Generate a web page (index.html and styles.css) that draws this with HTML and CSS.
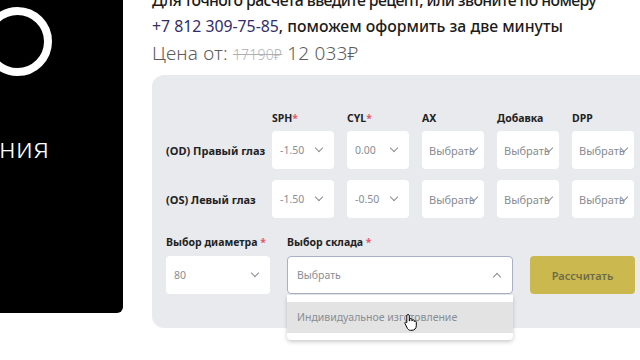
FILE: index.html
```html
<!DOCTYPE html>
<html lang="ru">
<head>
  <meta charset="UTF-8" />
  <meta name="viewport" content="width=device-width, initial-scale=1" />
  <title>Расчет линз</title>
  <link rel="stylesheet" href="styles.css">
</head>
<body>

  <!-- Left promo panel -->
  <aside class="promo">
    <div class="promo-ring"></div>
    <p class="promo-text">ния</p>
  </aside>

  <!-- Calculator -->
  <main class="calc">
    <p class="intro"><span class="lead">Для точного расчета введите рецепт, или звоните по номеру</span><br>
      <a class="phone" href="#">+7 812 309-75-85</a>, поможем оформить за две минуты</p>
    <p class="price">Цена от: <s class="old">17190₽</s> 12 033₽</p>

    <section class="form">
      <div class="grid">
        <span></span>
        <span class="col">SPH<i>*</i></span>
        <span class="col">CYL<i>*</i></span>
        <span class="col">AX</span>
        <span class="col">Добавка</span>
        <span class="col">DPP</span>

        <span class="eye">(OD) Правый глаз</span>
        <div class="sel"><span>-1.50</span><b class="chev"></b></div>
        <div class="sel"><span>0.00</span><b class="chev"></b></div>
        <div class="sel tight"><span>Выбрать</span><b class="chev"></b></div>
        <div class="sel tight"><span>Выбрать</span><b class="chev"></b></div>
        <div class="sel tight"><span>Выбрать</span><b class="chev"></b></div>

        <span class="eye">(OS) Левый глаз</span>
        <div class="sel"><span>-1.50</span><b class="chev"></b></div>
        <div class="sel"><span>-0.50</span><b class="chev"></b></div>
        <div class="sel tight"><span>Выбрать</span><b class="chev"></b></div>
        <div class="sel tight"><span>Выбрать</span><b class="chev"></b></div>
        <div class="sel tight"><span>Выбрать</span><b class="chev"></b></div>
      </div>

      <div class="bottom">
        <div class="field diam">
          <span class="col">Выбор диаметра <i>*</i></span>
          <div class="sel"><span>80</span><b class="chev"></b></div>
        </div>
        <div class="field store">
          <span class="col">Выбор склада <i>*</i></span>
          <div class="sel open"><span>Выбрать</span><b class="chev up"></b></div>
          <div class="menu">
            <div class="opt">Индивидуальное изготовление</div>
            <svg class="cursor" width="14" height="18" viewBox="0 0 14 18">
              <path d="M4 1.5c.8 0 1.3.6 1.3 1.3V8l.4-.1V6.6c0-.7.5-1.1 1.1-1.1s1.1.5 1.1 1.1v1.2l.3-.1c0-.6.5-1 1.1-1s1 .5 1 1.1v.8c.2-.4.6-.6 1-.6.6 0 1 .5 1 1.1v3.6c0 2.6-1.8 4.6-4.3 4.6H6.6c-1.4 0-2.4-.7-3.1-1.8L1 10.6c-.3-.5-.2-1.1.3-1.4.5-.3 1.1-.1 1.4.3l.1.2V2.8c0-.7.5-1.3 1.2-1.3z" fill="#fff" stroke="#000" stroke-width="1"/>
            </svg>
          </div>
        </div>
        <button class="calc-btn">Рассчитать</button>
      </div>
    </section>
  </main>

</body>
</html>
```

FILE: styles.css
```css
/* --- Reset & Layout --- */
* {
  box-sizing: border-box;
  margin: 0;
  padding: 0;
}
body {
  font-family: "Noto Sans", sans-serif;
  background: #fff;
  color: #222;
  display: flex;
  gap: 29px;
  height: 360px;
  overflow: hidden;
}

/* --- Promo panel --- */
.promo {
  position: relative;
  flex: 0 0 123px;
  height: 313px;
  background: #000;
  border-bottom-right-radius: 6px;
  overflow: hidden;
}
.promo-ring {
  position: absolute;
  left: -17px;
  top: 7px;
  width: 69px;
  height: 69px;
  border: 8px solid #fff;
  border-radius: 50%;
}
.promo-text {
  position: absolute;
  left: -1px;
  top: 128px;
  color: #fff;
  font-size: 28px;
  font-weight: 300;
  letter-spacing: 0.5px;
}

/* --- Calculator --- */
.calc {
  flex: 1;
  min-width: 0;
}
.intro {
  margin-top: -13px;
  font-size: 15.8px;
  line-height: 26px;
  font-weight: 500;
  color: #1b1b1b;
  white-space: nowrap;
}
.intro .lead {
  letter-spacing: -0.6px;
}
.phone {
  color: #2f2d6b;
  text-decoration: none;
  font-weight: 400;
}
.price {
  margin-top: 0;
  font-size: 19px;
  line-height: 28px;
  color: #5c5c5c;
  font-weight: 300;
  letter-spacing: 0.2px;
}
.price .old {
  font-size: 14px;
  color: #b0b0b0;
}

/* --- Form panel --- */
.form {
  margin-top: 6px;
  width: 500px;
  height: 253px;
  background: #e9eaee;
  border-radius: 12px 0 0 12px;
  padding: 36px 0 0 14px;
}
.grid {
  display: grid;
  grid-template-columns: 93px repeat(5, 62px);
  column-gap: 13px;
  row-gap: 11px;
  align-items: center;
}
.col {
  font-size: 10.5px;
  font-weight: 700;
  color: #222;
  line-height: 14px;
  margin-bottom: -5px;
}
.col i {
  font-style: normal;
  color: #e05a6a;
}
.eye {
  font-size: 11px;
  font-weight: 700;
  color: #222;
  white-space: nowrap;
}

/* --- Selects --- */
.sel {
  height: 38px;
  background: #fff;
  border-radius: 4px;
  display: flex;
  align-items: center;
  justify-content: space-between;
  padding: 0 12px 0 8px;
  font-size: 10.5px;
  color: #8a8d94;
}
.sel.tight {
  padding: 0 7px 0 7px;
  font-size: 11px;
  color: #888b92;
}
.sel.tight .chev {
  margin-left: -6px;
}
.chev {
  width: 6px;
  height: 6px;
  border-right: 1px solid #8a8d94;
  border-bottom: 1px solid #8a8d94;
  transform: rotate(45deg);
  margin-top: -4px;
}
.chev.up {
  transform: rotate(-135deg);
  margin-top: 3px;
}

/* --- Bottom row --- */
.bottom {
  display: flex;
  align-items: flex-end;
  margin-top: 17px;
  gap: 17px;
}
.field {
  position: relative;
  display: flex;
  flex-direction: column;
  gap: 7px;
}
.field .col {
  margin-bottom: 0;
}
.diam {
  width: 104px;
}
.store {
  width: 226px;
}
.sel.open {
  border: 1px solid #a7b0c4;
  padding-left: 9px;
}
.menu {
  position: absolute;
  top: 60px;
  left: 0;
  width: 226px;
  height: 45px;
  background: #fff;
  border-radius: 0 0 4px 4px;
  box-shadow: 0 2px 4px rgba(0, 0, 0, 0.2);
  padding-top: 7px;
}
.opt {
  height: 31px;
  background: #e3e3e4;
  padding-left: 10px;
  line-height: 31px;
  font-size: 10.5px;
  color: #8a8d94;
}
.cursor {
  position: absolute;
  left: 117px;
  top: 18px;
}
.calc-btn {
  width: 105px;
  height: 38px;
  border: none;
  border-radius: 4px;
  background: #cbb84f;
  color: #6e6c47;
  font-family: inherit;
  font-size: 11px;
  font-weight: 600;
}
```
